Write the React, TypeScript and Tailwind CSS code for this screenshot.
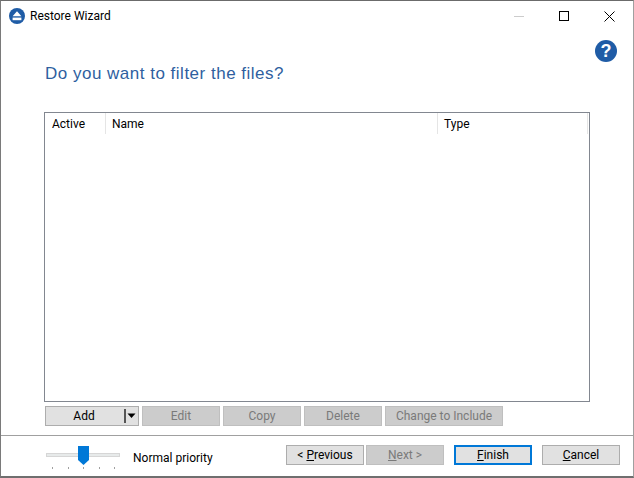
import type { ReactNode } from 'react'

const font = { fontFamily: 'Roboto, "Noto Sans", sans-serif' }

function Btn({ children, w, disabled, focus }: { children: ReactNode; w: string; disabled?: boolean; focus?: boolean }) {
  const base = 'h-5 flex items-center justify-center text-[12px] leading-none box-border '
  const look = disabled
    ? 'bg-[#cccccc] border border-[#bfbfbf] text-[#7a7a7a]'
    : focus
      ? 'bg-[#e1e1e1] border-2 border-[#0078d7] text-black'
      : 'bg-[#e1e1e1] border border-[#adadad] text-black'
  return <div className={base + look + ' ' + w}>{children}</div>
}

export default function App() {
  return (
    <div className="w-[634px] h-[478px] bg-white border-t border-l border-r border-b-2 border-t-[#6b6b6b] border-l-[#7a7a7a] border-r-[#a0a0a0] border-b-[#6f6f6f] flex flex-col overflow-hidden" style={font}>
      {/* title bar */}
      <div className="h-[30px] flex items-center shrink-0">
        <svg width="16" height="16" viewBox="0 0 16 16" className="ml-[8px]">
          <circle cx="8" cy="8" r="8" fill="#1f5ca6" />
          <path d="M8 3.2 L12.4 8.2 H3.6 Z" fill="#fff" />
          <rect x="3.6" y="9.6" width="8.8" height="2.6" fill="#fff" />
        </svg>
        <span className="ml-[5px] text-[12px] text-black">Restore Wizard</span>
        <div className="ml-auto flex items-center">
          <div className="w-[10px] h-px bg-[#cccccc] mr-[35px]" />
          <div className="w-[10px] h-[10px] border border-black mr-[35px]" />
          <svg width="11" height="11" viewBox="0 0 11 11" className="mr-[18px]">
            <path d="M0.5 0.5 L10.5 10.5 M10.5 0.5 L0.5 10.5" stroke="#000" strokeWidth="1" fill="none" />
          </svg>
        </div>
      </div>

      {/* help icon */}
      <div className="h-[24px] shrink-0 flex justify-end pr-[16px] pt-[9px]">
        <div className="w-[22px] h-[22px] rounded-full bg-[#1f5ca6] text-white flex items-center justify-center text-[18px] font-bold leading-none shrink-0" style={{ fontFamily: '"Liberation Sans", sans-serif' }}>?</div>
      </div>

      {/* heading */}
      <div className="pl-[44px] pt-[5px] h-[57px] shrink-0">
        <h1 className="text-[17px] leading-[28px] text-[#2f5f9f] tracking-[0.5px]" style={{ fontFamily: '"Liberation Sans", sans-serif' }}>Do you want to filter the files?</h1>
      </div>

      {/* filter list */}
      <div className="ml-[43px] w-[546px] h-[290px] border border-[#828790] shrink-0">
        <div className="flex h-[21px] text-[12px] text-black leading-none">
          <div className="w-[61px] pl-[7px] border-r border-[#e5e5e5] flex items-center">Active</div>
          <div className="w-[332px] pl-[6px] border-r border-[#e5e5e5] flex items-center">Name</div>
          <div className="w-[150px] pl-[6px] border-r border-[#e5e5e5] flex items-center">Type</div>
        </div>
      </div>

      {/* list actions */}
      <div className="ml-[44px] mt-[4px] flex gap-[3px] shrink-0">
        <div className="w-[94px] h-5 bg-[#e1e1e1] border border-[#adadad] flex items-center text-[12px] text-black box-border">
          <span className="flex-1 text-center pr-[2px]">Add</span>
          <div className="w-[2px] h-[14px] bg-[#555555]" />
          <svg width="12" height="6" viewBox="0 0 12 6"><path d="M1.5 0.5 H9.5 L5.5 5 Z" fill="#000" /></svg>
        </div>
        <Btn w="w-[78px]" disabled>Edit</Btn>
        <Btn w="w-[78px]" disabled>Copy</Btn>
        <Btn w="w-[78px]" disabled>Delete</Btn>
        <Btn w="w-[118px]" disabled>Change to Include</Btn>
      </div>

      {/* footer */}
      <div className="mt-[9px] border-t border-[#a0a0a0] flex-1 flex items-start relative">
        <div className="ml-[45px] mt-[10px] w-[74px] relative h-[24px] shrink-0">
          <div className="absolute left-0 right-0 top-[7px] h-[4px] bg-[#e7eaea] border border-[#d6d6d6]" />
          <svg width="11" height="19" viewBox="0 0 11 19" className="absolute left-[32px] top-0">
            <path d="M0 0 H11 V14 L5.5 19 L0 14 Z" fill="#0078d7" />
          </svg>
          <div className="absolute left-[6px] right-[5px] top-[21px] flex justify-between">
            <i className="w-px h-[2px] bg-[#a0a0a0]" />
            <i className="w-px h-[2px] bg-[#a0a0a0]" />
            <i className="w-px h-[2px] bg-[#a0a0a0]" />
            <i className="w-px h-[2px] bg-[#a0a0a0]" />
            <i className="w-px h-[2px] bg-[#a0a0a0]" />
          </div>
        </div>
        <span className="ml-[13px] mt-[14px] text-[12px] leading-[17px] text-black">Normal priority</span>
        <div className="ml-auto mr-[13px] mt-[9px] flex">
          <Btn w="w-[78px]"><span>&lt; <u>P</u>revious</span></Btn>
          <div className="w-[2px]" />
          <Btn w="w-[78px]" disabled><span><u>N</u>ext &gt;</span></Btn>
          <div className="w-[10px]" />
          <Btn w="w-[78px]" focus><span><u>F</u>inish</span></Btn>
          <div className="w-[10px]" />
          <Btn w="w-[78px]"><span><u>C</u>ancel</span></Btn>
        </div>
      </div>
    </div>
  )
}
